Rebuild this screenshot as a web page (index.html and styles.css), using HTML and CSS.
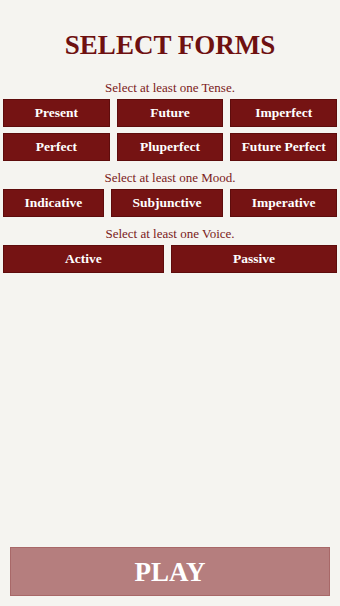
FILE: index.html
```html
<!DOCTYPE html>
<html>
<head>
<meta charset="utf-8">
<link rel="stylesheet" href="styles.css">
</head>
<body>
<div class="screen">
  <h1 class="title">SELECT FORMS</h1>
  <p class="label first">Select at least one Tense.</p>
  <div class="row">
    <button class="opt">Present</button>
    <button class="opt">Future</button>
    <button class="opt">Imperfect</button>
  </div>
  <div class="row second">
    <button class="opt">Perfect</button>
    <button class="opt">Pluperfect</button>
    <button class="opt">Future Perfect</button>
  </div>
  <p class="label">Select at least one Mood.</p>
  <div class="row auto">
    <button class="opt">Indicative</button>
    <button class="opt">Subjunctive</button>
    <button class="opt">Imperative</button>
  </div>
  <p class="label">Select at least one Voice.</p>
  <div class="row auto">
    <button class="opt">Active</button>
    <button class="opt">Passive</button>
  </div>
  <div class="spacer"></div>
  <button class="play">PLAY</button>
</div>
</body>
</html>
```
FILE: styles.css
```css
html, body {
  margin: 0;
  padding: 0;
  background: #f5f4f0;
}
.screen {
  height: 606px;
  display: flex;
  flex-direction: column;
  font-family: "Liberation Serif", "Times New Roman", serif;
  color: #7a1616;
}
.title {
  margin: 27px 0 0;
  font-size: 27px;
  line-height: 36px;
  font-weight: bold;
  text-align: center;
  color: #6e1010;
}
.label {
  margin: 10px 0 4px;
  font-size: 13px;
  line-height: 14px;
  text-align: center;
  color: #7a2020;
}
.label.first {
  margin-top: 18px;
}
.row {
  display: flex;
  gap: 7px;
  padding: 0 3px;
}
.row.second {
  margin-top: 6px;
}
.opt {
  flex: 1 1 0;
  height: 28px;
  padding: 0;
  margin: 0;
  background: #751313;
  border: 1px solid #5e0c0c;
  color: #fff;
  font-family: "Liberation Serif", "Times New Roman", serif;
  font-weight: bold;
  font-size: 13.5px;
}
.row.auto .opt {
  flex: 1 1 auto;
}
.spacer {
  flex: 1;
}
.play {
  margin: 0 10px 10px;
  height: 49px;
  padding: 2px 0 0;
  background: #b57e7e;
  border: 1px solid #a86868;
  color: #fff;
  font-family: "Liberation Serif", "Times New Roman", serif;
  font-weight: bold;
  font-size: 27px;
}
```
